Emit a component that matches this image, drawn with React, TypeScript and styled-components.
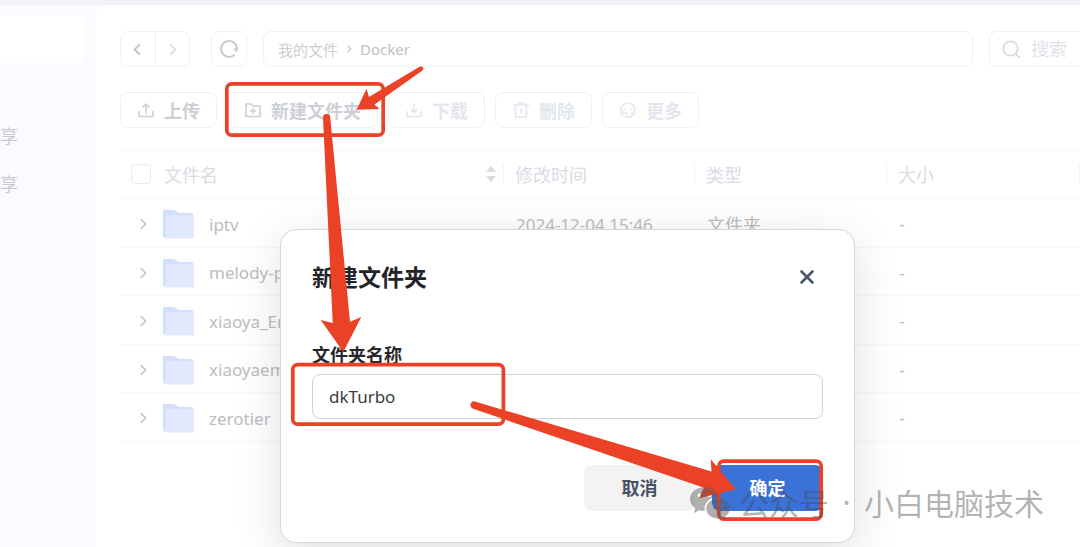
import React, { useState } from "react";
import styled, { createGlobalStyle, css } from "styled-components";

const GlobalStyle = createGlobalStyle`
  * { box-sizing: border-box; }
  html, body { margin: 0; height: 100%; }
  body {
    overflow: hidden;
    background: #fff;
    font-family: "Noto Sans", "Noto Sans CJK SC", sans-serif;
    font-size: 18px;
  }
  button, input { font: inherit; margin: 0; }
  svg { flex-shrink: 0; }
  #root { height: 100%; }
`;

const Page = styled.div`
  position: relative;
  display: flex;
  flex-direction: column;
  min-height: 100%;
  background: #fafbfe;
`;

const TopStrip = styled.div`
  height: 5px;
  background: #f2f3f8;
`;

const Body = styled.div`
  display: flex;
  flex: 1;
`;

const Sidebar = styled.nav`
  display: flex;
  flex-direction: column;
  flex: 0 0 95px;
  padding: 10px 10px 0 0;
`;

const SideLink = styled.a<{ $active?: boolean }>`
  display: flex;
  align-items: center;
  height: 48px;
  border-radius: 0 8px 8px 0;
  color: #c9cacd;
  text-decoration: none;
  background: ${(p) => (p.$active ? "#fff" : "transparent")};
  margin-bottom: ${(p) => (p.$active ? "48px" : "0")};
`;

const Main = styled.main`
  flex: 1;
  min-width: 0;
  padding: 26px 0 0 25px;
  border-radius: 12px 0 0 0;
  background: #fff;
`;

const NavRow = styled.div`
  display: flex;
  gap: 16px;
  height: 36px;
  margin-bottom: 25px;
`;

const frame = css`
  border: 1px solid #f0f1f3;
  border-radius: 8px;
  background: #fff;
`;

const Stepper = styled.div`
  ${frame}
  display: flex;
  width: 70px;
  margin-right: 5px;
`;

const StepButton = styled.button<{ $faint?: boolean }>`
  display: flex;
  flex: 1;
  align-items: center;
  justify-content: center;
  padding: 0;
  border: 0;
  background: none;
  color: ${(p) => (p.$faint ? "#dde1e7" : "#bfc2c8")};
  & + & { border-left: 1px solid #f0f1f3; }
`;

const RefreshButton = styled.button`
  ${frame}
  display: flex;
  align-items: center;
  justify-content: center;
  width: 36px;
  padding: 0;
  color: #c6c8cd;
`;

const PathBar = styled.div`
  ${frame}
  display: flex;
  flex: 1;
  align-items: center;
  gap: 6px;
  padding: 0 14px;
  font-size: 15px;
  color: #c9cacd;
`;

const Crumb = styled.a<{ $current?: boolean }>`
  color: ${(p) => (p.$current ? "#bfc0c3" : "#cdced1")};
  text-decoration: none;
`;

const SearchBox = styled.label`
  ${frame}
  display: flex;
  align-items: center;
  gap: 10px;
  width: 91px;
  padding-left: 12px;
  border-right: 0;
  border-radius: 8px 0 0 8px;
  color: #d5dbe4;
`;

const SearchInput = styled.input`
  flex: 1;
  min-width: 0;
  padding: 0;
  border: 0;
  outline: 0;
  background: none;
  &::placeholder { color: #dfe3ea; opacity: 1; }
`;

const ToolRow = styled.div`
  display: flex;
  gap: 10px;
  margin-bottom: 22px;
`;

const ToolButton = styled.button<{ $faint?: boolean }>`
  ${frame}
  display: flex;
  align-items: center;
  gap: 9px;
  height: 36px;
  padding: 0 16px;
  font-weight: 700;
  white-space: nowrap;
  color: ${(p) => (p.$faint ? "#e3e7ed" : "#cccfd4")};
`;

const FileTable = styled.table`
  width: 100%;
  table-layout: fixed;
  border-collapse: collapse;
  border-top: 1px solid #f5f6f8;
`;

const Col = styled.col<{ $w?: number }>`
  width: ${(p) => (p.$w ? `${p.$w}px` : "auto")};
`;

const HeadCell = styled.th`
  height: 48px;
  padding: 0 0 2px;
  border-bottom: 1px solid #f5f6f8;
  font-weight: 400;
  text-align: left;
  color: #d9dce4;
`;

const HeadInner = styled.div`
  display: flex;
  align-items: center;
  height: 20px;
  padding: 0 6px 0 11px;
  border-right: 1px solid #f2f3f6;
`;

const HeadName = styled.label`
  display: flex;
  flex: 1;
  align-items: center;
  gap: 13px;
`;

const CheckBox = styled.input`
  appearance: none;
  width: 20px;
  height: 20px;
  border: 1px solid #e9ebf3;
  border-radius: 4px;
  background: #fff;
`;

const FileRow = styled.tr`
  height: 49px;
  &:nth-child(even) { height: 48px; }
`;

const Cell = styled.td<{ $latin?: boolean }>`
  padding: 2px 12px 0;
  border-bottom: 1px solid #f8f8f9;
  font-size: ${(p) => (p.$latin ? "17px" : "18px")};
  white-space: nowrap;
  color: #bdbdbf;
`;

const NameCell = styled.div`
  display: flex;
  align-items: center;
  padding-left: 4px;
`;

const ExpandButton = styled.button`
  display: flex;
  padding: 0;
  margin-right: 12px;
  border: 0;
  background: none;
  color: #c3c6cd;
`;

const FileName = styled.span`
  margin-left: 14px;
`;

const Overlay = styled.div`
  position: absolute;
  inset: 0;
  display: flex;
  align-items: flex-start;
  justify-content: center;
  padding: 229px 0 0 55px;
`;

const Dialog = styled.form`
  width: 575px;
  padding: 29px 31px 31px;
  border: 1px solid #d5d6d8;
  border-radius: 16px;
  background: #fff;
  box-shadow: 0 12px 48px rgba(0, 0, 0, 0.13);
`;

const DialogHead = styled.div`
  display: flex;
  align-items: center;
  justify-content: space-between;
  height: 36px;
  margin-bottom: 47px;
`;

const Title = styled.h2`
  margin: 0;
  font-size: 23px;
  line-height: 36px;
  font-weight: 700;
  color: #222326;
`;

const CloseButton = styled.button`
  display: flex;
  padding: 8px;
  border: 0;
  background: none;
  color: #4c566b;
`;

const FieldLabel = styled.label`
  display: block;
  height: 32px;
  line-height: 26px;
  font-weight: 700;
  color: #26272b;
`;

const FieldInput = styled.input`
  display: block;
  width: 100%;
  height: 45px;
  padding: 0 16px;
  border: 1px solid #ccd3e2;
  border-radius: 8px;
  outline: 0;
  font-size: 17px;
  color: #3b3c40;
`;

const Actions = styled.div`
  display: flex;
  justify-content: flex-end;
  gap: 17px;
  margin-top: 46px;
`;

const ActionButton = styled.button<{ $primary?: boolean }>`
  width: 111px;
  height: 46px;
  padding: 0 0 2px;
  border: 0;
  border-radius: 8px;
  font-weight: 700;
  color: ${(p) => (p.$primary ? "#fff" : "#475263")};
  background: ${(p) => (p.$primary ? "#3a72d8" : "#f3f3f4")};
`;

const Marks = styled.svg`
  position: absolute;
  top: 0;
  left: 0;
  pointer-events: none;
`;

const Watermark = styled.div`
  position: absolute;
  left: 689px;
  top: 482px;
  display: flex;
  align-items: center;
  font-family: "Noto Sans CJK SC", sans-serif;
  font-size: 30px;
  line-height: 40px;
  white-space: nowrap;
  color: rgba(70, 70, 70, 0.42);
  pointer-events: none;
`;

const WatermarkText = styled.span`
  padding: 0 0 2px;
`;

const WatermarkDot = styled.span`
  width: 35px;
  font-family: "Noto Sans", sans-serif;
  text-align: center;
`;

const WatermarkLogo = styled.svg`
  margin-right: 9px;
`;

const stroke = { fill: "none", stroke: "currentColor", strokeLinejoin: "round", strokeLinecap: "round" } as const;

const Chevron = ({ left, size = 16, weight = 2 }: { left?: boolean; size?: number; weight?: number }) => (
  <svg width={size} height={size} viewBox="0 0 16 16" {...stroke} strokeWidth={weight}>
    <path d={left ? "M10 3 5 8l5 5" : "M6 3l5 5-5 5"} />
  </svg>
);

const toolPaths: Record<string, React.ReactNode> = {
  upload: <path d="M2 10.500v5h14v-5M9 12V3.500M6 6 9 3l3 3" />,
  folder: <path d="M2 3h5l2 2h7v10.500H2zM9 7.500v5M6.500 10h5" />,
  download: <path d="M2 10.500v5h14v-5M9 3v8.500M6 8.500l3 3 3-3" />,
  trash: <path d="M1.500 4h15M6 4V2h6v2M3.500 4v12h11V4M9 8v4" />,
  more: (
    <>
      <path d="M3 12.500A7 7 0 0 1 8 2M11 2.300a7 7 0 0 1 4.500 9M14 14a7 7 0 0 1-9.500.500" />
      <path d="M1.500 13.500 5 11l3.500 2M12 12.500l3 .500.500-3M6 8v.500M12 8v.500" />
    </>
  ),
};

const ToolIcon = ({ name }: { name: string }) => (
  <svg width="18" height="18" viewBox="0 0 18 18" {...stroke} strokeWidth="1.600">
    {toolPaths[name]}
  </svg>
);

const FolderIcon = () => (
  <svg width="33" height="30" viewBox="0 0 33 30">
    <path d="M1 2a1 1 0 0 1 1-1h10l5 3h13a1 1 0 0 1 1 1v23.500H2a1 1 0 0 1-1-1z" fill="#d3e0fc" />
    <path d="M3.500 8a1.500 1.500 0 0 1 1.500-1.500h26a1 1 0 0 1 1 1V28a1.500 1.500 0 0 1-1.500 1.500H3.500z" fill="#e1e9fc" />
  </svg>
);

const tools = [
  { icon: "upload", text: "上传" },
  { icon: "folder", text: "新建文件夹" },
  { icon: "download", text: "下载", faint: true },
  { icon: "trash", text: "删除", faint: true },
  { icon: "more", text: "更多", faint: true },
];

const files = [
  { name: "iptv", time: "2024-12-04 15:46", kind: "文件夹" },
  { name: "melody-player", time: "2024-12-04 15:46", kind: "文件夹" },
  { name: "xiaoya_Emby", time: "2024-12-04 15:46", kind: "文件夹" },
  { name: "xiaoyaemby", time: "2024-12-04 15:46", kind: "文件夹" },
  { name: "zerotier", time: "2024-12-04 15:46", kind: "文件夹" },
];

export default function App() {
  const [folderName, setFolderName] = useState("dkTurbo");

  return (
    <Page>
      <GlobalStyle />
      <TopStrip />
      <Body>
        <Sidebar>
          <SideLink href="#" $active aria-label="我的文件" />
          <SideLink href="#">享</SideLink>
          <SideLink href="#">享</SideLink>
        </Sidebar>
        <Main>
          <NavRow>
            <Stepper>
              <StepButton aria-label="后退"><Chevron left size={15} /></StepButton>
              <StepButton aria-label="前进" $faint><Chevron size={15} /></StepButton>
            </Stepper>
            <RefreshButton aria-label="刷新">
              <svg width="20" height="20" viewBox="0 0 20 20" {...stroke} strokeWidth="1.800">
                <path d="M15 16.200A8 8 0 1 1 18 10.500" />
                <path d="M14.800 9.800h4.200l-1.500 3.200z" fill="currentColor" strokeWidth="0.500" />
              </svg>
            </RefreshButton>
            <PathBar>
              <Crumb href="#">我的文件</Crumb>
              <Chevron size={10} />
              <Crumb href="#" $current>Docker</Crumb>
            </PathBar>
            <SearchBox>
              <svg width="19" height="19" viewBox="0 0 19 19" {...stroke} strokeWidth="1.700">
                <circle cx="8.500" cy="8.500" r="7.200" />
                <path d="M13.800 13.800 17.500 17.500" />
              </svg>
              <SearchInput placeholder="搜索" aria-label="搜索" />
            </SearchBox>
          </NavRow>

          <ToolRow>
            {tools.map((t) => (
              <ToolButton key={t.text} $faint={t.faint}>
                <ToolIcon name={t.icon} />
                {t.text}
              </ToolButton>
            ))}
          </ToolRow>

          <FileTable>
            <colgroup>
              <Col $w={384} />
              <Col $w={191} />
              <Col $w={192} />
              <Col />
            </colgroup>
            <thead>
              <tr>
                <HeadCell>
                  <HeadInner>
                    <HeadName>
                      <CheckBox type="checkbox" />
                      文件名
                    </HeadName>
                    <svg width="12" height="18" viewBox="0 0 12 18" fill="#d5dae3">
                      <path d="M6 1l5 6H1z" />
                      <path d="M6 17l5-6H1z" />
                    </svg>
                  </HeadInner>
                </HeadCell>
                <HeadCell><HeadInner>修改时间</HeadInner></HeadCell>
                <HeadCell><HeadInner>类型</HeadInner></HeadCell>
                <HeadCell><HeadInner>大小</HeadInner></HeadCell>
              </tr>
            </thead>
            <tbody>
              {files.map((f) => (
                <FileRow key={f.name}>
                  <Cell $latin>
                    <NameCell>
                      <ExpandButton aria-label="展开"><Chevron size={14} /></ExpandButton>
                      <FolderIcon />
                      <FileName>{f.name}</FileName>
                    </NameCell>
                  </Cell>
                  <Cell $latin>{f.time}</Cell>
                  <Cell>{f.kind}</Cell>
                  <Cell>-</Cell>
                </FileRow>
              ))}
            </tbody>
          </FileTable>
        </Main>
      </Body>

      <Overlay>
        <Dialog role="dialog" aria-labelledby="dialog-title" onSubmit={(e) => e.preventDefault()}>
          <DialogHead>
            <Title id="dialog-title">新建文件夹</Title>
            <CloseButton type="button" aria-label="关闭">
              <svg width="16" height="16" viewBox="0 0 16 16" {...stroke} strokeWidth="2.600">
                <path d="M2.500 2.500l11 11M13.500 2.500l-11 11" />
              </svg>
            </CloseButton>
          </DialogHead>
          <FieldLabel htmlFor="folder-name">文件夹名称</FieldLabel>
          <FieldInput id="folder-name" value={folderName} onChange={(e) => setFolderName(e.target.value)} />
          <Actions>
            <ActionButton type="button">取消</ActionButton>
            <ActionButton type="submit" $primary>确定</ActionButton>
          </Actions>
        </Dialog>
      </Overlay>

      <Marks width="1080" height="547" viewBox="0 0 1080 547" aria-hidden="true">
        <g fill="none" stroke="#eb4126" strokeWidth="3.700">
          <rect x="226.800" y="83.800" width="156.400" height="51.400" rx="5" />
          <rect x="292.800" y="364.600" width="210.600" height="59.600" rx="5" />
          <rect x="718.800" y="461.200" width="102.400" height="58" rx="5" />
        </g>
        <g fill="#eb4126">
          <path d="M420 66.500Q423 66 423.500 68.500Q423.500 70 421 71.500L374.500 104.500L379.500 109L356.700 109.700L366.500 88.700L369 97Z" />
          <path d="M323 117.500Q323 114 326.500 114Q330 114 330.200 117.500L350 321.700L361.300 317L343.300 352L320.700 320L332.700 323Z" />
          <path d="M474 401.300Q471 401.500 470.300 405Q470.500 407.800 473 408.700L704 487.700L699 498.300L735.700 489.300L710.700 459.300L711.500 471.500Z" />
        </g>
      </Marks>

      <Watermark>
        <WatermarkLogo width="41" height="36" viewBox="0 0 41 36" fill="#5a5a5a" fillOpacity="0.480">
          <path fillRule="evenodd" d="M15.500 2C7.400 2 1 7.200 1 14c0 3.800 2 7 5.300 9.200L5 28l5.300-2.700c1.700.500 3.500.700 5.500.700C14.500 18.500 20 12 30 11.700 28.500 6 22.500 2 15.500 2zM10.500 8.500a1.900 1.900 0 1 1 0 3.800 1.900 1.900 0 0 1 0-3.800zm10 0a1.900 1.900 0 1 1 0 3.800 1.900 1.900 0 0 1 0-3.800z" />
          <path fillRule="evenodd" d="M29 13.500c-6.500 0-11.800 4.500-11.800 10S22.500 33.500 29 33.500c1.500 0 2.900-.200 4.200-.600l4 2.200-1-3.700c2.800-1.900 4.600-4.700 4.600-7.900 0-5.500-5.300-10-11.800-10zM25 19a1.500 1.500 0 1 1 0 3 1.500 1.500 0 0 1 0-3zm8 0a1.500 1.500 0 1 1 0 3 1.500 1.500 0 0 1 0-3z" />
        </WatermarkLogo>
        <WatermarkText>公众号</WatermarkText>
        <WatermarkDot>·</WatermarkDot>
        <WatermarkText>小白电脑技术</WatermarkText>
      </Watermark>
    </Page>
  );
}
